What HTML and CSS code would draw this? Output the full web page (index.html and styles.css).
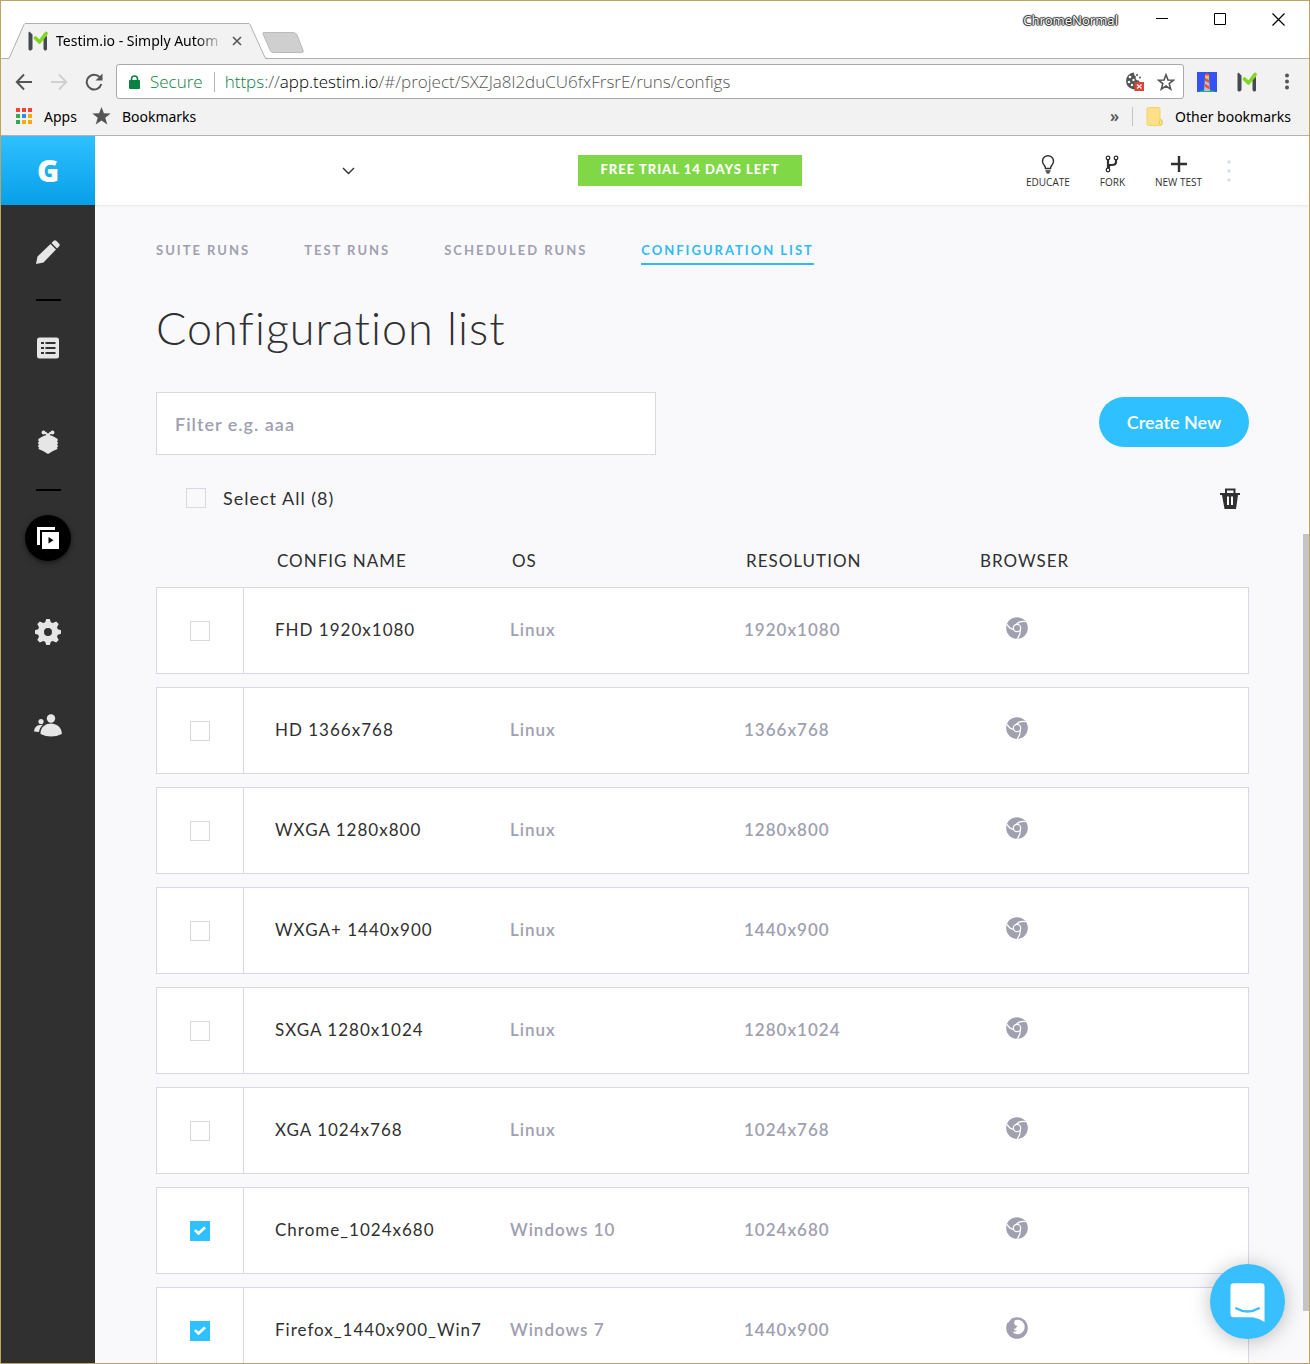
FILE: index.html
```html
<!DOCTYPE html>
<html lang="en">
<head>
<meta charset="utf-8">
<meta name="viewport" content="width=device-width, initial-scale=1">
<title>Testim.io - Simply Automated</title>
<link rel="stylesheet" href="styles.css">
</head>
<body>
<svg class="sprite" aria-hidden="true">
  <symbol id="i-chrome" viewBox="0 0 22 22">
    <circle cx="11" cy="11" r="10.8" fill="currentColor"/>
    <g fill="none" stroke="#fff" stroke-width="1.2">
      <circle cx="11" cy="11" r="3.7"/>
      <path d="M10.500 7.300C12.500 4.600 16 4 19.600 4.600"/>
      <path d="M14.400 12.700C14.600 16 13.400 19 11.300 22"/>
      <path d="M7.600 12.500C4.600 12 2.400 9.800 1 7.400"/>
    </g>
  </symbol>
  <symbol id="i-firefox" viewBox="0 0 22 22">
    <circle cx="11" cy="11" r="10.8" fill="currentColor"/>
    <path fill="#fff" d="M8.600 3.400c4-1.600 8.400.3 9.700 4.200 1.200 4-.6 8.300-4.600 9.300-2.900.7-5.900-.2-7-2.500 1.600.7 3.300.3 4.500-.8-1.700-.1-3-.5-3.600-1.900l2.500-.3.300-1.500 1.500-.9c-1.500-.2-3-.5-3.500-1.900-.3-1.300-.1-2.600.2-3.700z"/>
    <path fill="#fff" d="M0 3.500L1.600 1l.9 2L4 1.200l.7 1.300L2 6z"/>
  </symbol>
  <symbol id="i-m" viewBox="0 0 20 20">
    <path fill="#454a50" d="M.5 1.500L1.500.5 4.500 3.500V18L3 19.500H1.500L.5 18.500zM15.500 8l3.500-3.500V18.500l-1 1h-1.500l-1-1.500z"/>
    <path fill="none" stroke="#81d61f" stroke-width="3.600" stroke-linejoin="round" stroke-linecap="round" d="M7.500 7l4 4L18 2.500"/>
  </symbol>
</svg>

<div class="window">
  <header class="titlebar">
    <div class="tab">
      <svg class="tab-shape" viewBox="0 0 260 37" aria-hidden="true"><path d="M0 36L1 35.500 16 1.500 17 .5H241L242 1.500 257 35.500 259 37H0z" fill="#f2f2f2"/><path d="M0 35.500H1L16 1.500 17 .5H241L242 1.500 257 34.500 259 35.500" fill="none" stroke="#b0b0b0"/></svg>
      <svg class="favicon" aria-hidden="true"><use href="#i-m"/></svg>
      <span class="tab-title">Testim.io - Simply Autom</span>
      <button class="plain tab-close" aria-label="Close tab"><svg width="10" height="10" viewBox="0 0 10 10"><path d="M1 1l8 8M9 1L1 9" stroke="#555" stroke-width="1.600"/></svg></button>
    </div>
    <button class="plain new-tab" aria-label="New tab"><svg width="44" height="24" viewBox="0 0 44 24"><path d="M3 1.500H32Q35 1.500 36 4L42 19Q43 21.500 41 21.500H12Q10 21.500 9 19L2 3Q1.500 1.500 3 1.500z" fill="#cfcfcf" stroke="#bbb"/></svg></button>
    <span class="profile">ChromeNormal</span>
    <div class="controls">
      <button class="plain control" aria-label="Minimize"><svg width="13" height="13" viewBox="0 0 13 13"><path d="M0 5.500h12" stroke="#000"/></svg></button>
      <button class="plain control" aria-label="Maximize"><svg width="13" height="13" viewBox="0 0 13 13"><path d="M.5 .5h11v11H.5z" fill="none" stroke="#000"/></svg></button>
      <button class="plain control" aria-label="Close"><svg width="13" height="13" viewBox="0 0 13 13"><path d="M.5 .5l12 12M12.500 .5l-12 12" stroke="#000" stroke-width="1.200"/></svg></button>
    </div>
  </header>

  <div class="toolbar">
    <div class="nav-buttons">
      <button class="plain tool" aria-label="Back"><svg width="18" height="18" viewBox="0 0 18 18"><path d="M17 9H2M9 1.500L1.800 9 9 16.500" fill="none" stroke="#555" stroke-width="2"/></svg></button>
      <button class="plain tool" aria-label="Forward"><svg width="18" height="18" viewBox="0 0 18 18"><path d="M1 9h15M9 1.500L16.200 9 9 16.500" fill="none" stroke="#d0d0d0" stroke-width="2"/></svg></button>
      <button class="plain tool" aria-label="Reload"><svg width="18" height="18" viewBox="0 0 18 18"><path d="M14.700 4.200A7.400 7.400 0 1 0 16.300 11" fill="none" stroke="#555" stroke-width="2"/><path d="M17.500 .5V7.500H10.500z" fill="#555"/></svg></button>
    </div>
    <div class="omnibox">
      <svg class="lock" width="11" height="14" viewBox="0 0 11 14" aria-hidden="true"><rect y="5" width="11" height="9" rx="1" fill="#0b8043"/><path d="M2.500 6V4a3 3 0 0 1 6 0v2" fill="none" stroke="#0b8043" stroke-width="1.600"/></svg>
      <span class="secure">Secure</span>
      <span class="url"><span class="green">https</span>://<span class="host">app.testim.io</span>/#/project/SXZJa8l2duCU6fxFrsrE/runs/configs</span>
      <button class="plain" aria-label="Cookies blocked"><svg width="20" height="20" viewBox="0 0 20 20"><path d="M9 .5a8.500 8.500 0 1 0 1 17l7-7c-2 0-3-1-3-2-3 0-4-2-3-4-2-1-2-2-2-4z" fill="#555"/><g fill="#fff"><circle cx="5" cy="5" r="1.300"/><circle cx="4" cy="10" r="1.300"/><circle cx="8.500" cy="8" r="1.200"/><circle cx="7" cy="13" r="1.200"/></g><circle cx="12" cy="3" r="1" fill="#555"/><circle cx="15" cy="5.500" r="1" fill="#555"/><rect x="9.500" y="10" width="9.500" height="9" fill="#db4437"/><path d="M12 12.500l4.500 4M16.500 12.500l-4.500 4" stroke="#fff" stroke-width="1.300"/></svg></button>
      <button class="plain" aria-label="Bookmark this page"><svg width="18" height="18" viewBox="0 0 18 18"><path d="M9 1.800l2 5.200 5.500.2-4.300 3.400 1.500 5.500L9 13l-4.700 3.100 1.500-5.500L1.500 7.200 7 7z" fill="none" stroke="#555" stroke-width="1.600"/></svg></button>
    </div>
    <div class="extensions">
      <button class="plain" aria-label="Lighthouse"><svg width="20" height="20" viewBox="0 0 20 20"><path d="M0 0h20v20H0z" fill="#3453f5"/><ellipse cx="10" cy="20" rx="8" ry="2" fill="#1db954"/><path d="M8 6h4l1 13H7z" fill="#b9bde0"/><path d="M8 6l4 2v3L7.500 8.500zM7.500 11.500l5 3v3l-5-3z" fill="#f4511e"/><path d="M8 3l2-1.500L12 3v3H8z" fill="#fbc02d"/><path d="M7.500 3.500L10 1l2.500 2.500z" fill="#f4511e"/></svg></button>
      <button class="plain" aria-label="Testim"><svg width="20" height="20"><use href="#i-m"/></svg></button>
      <button class="plain" aria-label="Menu"><svg width="20" height="20" viewBox="0 0 20 20" fill="#555"><circle cx="10" cy="3.500" r="2"/><circle cx="10" cy="9.500" r="2"/><circle cx="10" cy="15.500" r="2"/></svg></button>
    </div>
  </div>

  <nav class="bookmarks" aria-label="Bookmarks">
    <a class="bookmark" href="#apps"><svg width="18" height="18" viewBox="0 0 18 18" aria-hidden="true"><path fill="#f44336" d="M1 1h4v4H1zM7 1h4v4H7zM13 1h4v4h-4z"/><path fill="#34a853" d="M1 7h4v4H1zM1 13h4v4H1z"/><path fill="#2a8cf4" d="M7 7h4v4H7z"/><path fill="#fbab00" d="M13 7h4v4h-4zM7 13h4v4H7zM13 13h4v4h-4z"/></svg>Apps</a>
    <a class="bookmark" href="#bookmarks"><svg width="19" height="18" viewBox="0 0 19 18" aria-hidden="true"><path fill="#555" d="M9.500 0l2.400 6.300 6.800.2-5.400 4.200 2 6.800-5.800-4-5.800 4 2-6.800L.3 6.500l6.800-.2z"/></svg>Bookmarks</a>
    <button class="plain overflow" aria-label="More bookmarks">»</button>
    <a class="bookmark other" href="#other"><svg width="18" height="19" viewBox="0 0 18 19" aria-hidden="true"><path d="M1 2q0-1.500 1.500-1.500h10q1.500 0 1.500 1.500v10l2 1v4q0 1.500-1.500 1.500H2.500Q1 18.500 1 17z" fill="#fee08a" stroke="#f3d16c"/><path d="M13.500 17v-3q1-2 2.500 0v3q-1 1.500-2.500 0z" fill="#ffe79b" stroke="#efc84a"/></svg>Other bookmarks</a>
  </nav>

  <div class="app">
    <aside class="sidebar">
      <a class="logo" href="#home" aria-label="Home">G</a>
      <nav class="side-nav" aria-label="Main">
        <a class="side-item" href="#edit" aria-label="Editor"><svg width="26" height="26" viewBox="0 0 26 26"><path fill="currentColor" d="M1 25l1.500-7.500L15.500 5l5.500 5.500L8.500 23.500zM16.500 4l2.200-2.200Q20 .8 21.200 1.800l3 3q1 1.200 0 2.400L22 9.500z"/></svg></a>
        <hr class="side-rule">
        <a class="side-item" href="#tests" aria-label="Test list"><svg width="22" height="22" viewBox="0 0 22 22"><rect width="22" height="21" y=".5" rx="2.500" fill="currentColor"/><path d="M4 6h3M8.500 6h10M4 11h3M8.500 11h10M4 16h3M8.500 16h10" stroke="#303030" stroke-width="2"/></svg></a>
        <a class="side-item" href="#bugs" aria-label="Bugs"><svg width="22" height="24" viewBox="0 0 22 24"><g fill="currentColor"><path d="M11 4.500L15.500 6 20 8.500 21 10 20 11.500 21.200 13 20 14.500 21.200 16 20 17.500 20.500 19 16 21 11 24 6 21 1.500 19 2 17.500.8 16 2 14.500.8 13 2 11.500 1 10 2 8.500 6.500 6z"/><circle cx="6.500" cy="2.500" r="1.900"/><circle cx="15.500" cy="2.500" r="1.900"/></g><path d="M6.500 2.500Q9 2 11 5.500 13 2 15.500 2.500" fill="none" stroke="currentColor" stroke-width="2"/></svg></a>
        <hr class="side-rule">
        <a class="side-item active" href="#runs" aria-label="Runs"><span class="disc"><svg width="22" height="22" viewBox="0 0 22 22"><path fill="currentColor" d="M0 0h18v3H3v15H0zM5 5h17v17H5z"/><path d="M11.500 10v6.500l5-3.200z" fill="#000"/></svg></span></a>
        <a class="side-item" href="#settings" aria-label="Settings"><svg width="26" height="26" viewBox="0 0 26 26"><path fill="currentColor" fill-rule="evenodd" d="M11.200 0h3.600l1 3.300 2 .8 3.400-1.700 2.500 2.500L22 8.200l.8 2 3.200 1v3.600l-3.200 1-.8 2 1.700 3.300-2.500 2.500-3.400-1.700-2 .8-1 3.300h-3.600l-1-3.300-2-.8-3.400 1.700-2.500-2.500L4 17.800l-.8-2-3.200-1v-3.600l3.200-1 .8-2L2.300 4.900l2.500-2.500 3.400 1.700 2-.8zM13 9a4 4 0 1 0 0 8 4 4 0 0 0 0-8z"/></svg></a>
        <a class="side-item" href="#team" aria-label="Team"><svg width="28" height="24" viewBox="0 0 28 24"><g fill="currentColor"><circle cx="17" cy="4.500" r="4.200"/><path d="M6.500 20C6 13 12 9.500 17 9.500s11 3.500 10.800 10.500Q17 25 6.500 20z"/><circle cx="7" cy="7.500" r="2.600"/><path d="M0 17.500q.5-6 6-6.500l3-.3Q5.500 13.500 5 18z"/></g></svg></a>
      </nav>
    </aside>

    <div class="page">
      <header class="app-header">
        <button class="plain project" aria-label="Choose project"><svg width="13" height="8" viewBox="0 0 13 8"><path d="M1 1l5.500 5.500L12 1" fill="none" stroke="#303030" stroke-width="1.400"/></svg></button>
        <button class="plain trial">FREE TRIAL 14 DAYS LEFT</button>
        <div class="actions">
          <button class="plain action"><svg width="20" height="20" viewBox="0 0 20 20"><path d="M7.500 14.500Q7.500 12.500 6 11A5.500 5.500 0 1 1 14 11Q12.500 12.500 12.500 14.500zM7.500 17h5M8.500 18.800h3" fill="none" stroke="#303030" stroke-width="1.500"/></svg>EDUCATE</button>
          <button class="plain action"><svg width="20" height="20" viewBox="0 0 20 20"><g fill="none" stroke="#303030"><path d="M6 5v9M14 5v3q0 3-4 3H7v3" stroke-width="2.200"/><g stroke-width="1.300"><circle cx="6" cy="4" r="1.800"/><circle cx="14" cy="4" r="1.800"/><circle cx="6" cy="16" r="1.800"/></g></g></svg>FORK</button>
          <button class="plain action"><svg width="20" height="20" viewBox="0 0 20 20"><path d="M10 2v16M2 10h16" stroke="#303030" stroke-width="2.400"/></svg>NEW TEST</button>
          <button class="plain more" aria-label="More"><svg width="6" height="24" viewBox="0 0 6 24" fill="#d8e0ec"><circle cx="3" cy="3" r="1.800"/><circle cx="3" cy="12" r="1.800"/><circle cx="3" cy="21" r="1.800"/></svg></button>
        </div>
      </header>

      <main class="main">
        <nav class="tabs" aria-label="Runs">
          <a class="tab-link" href="#suite">SUITE RUNS</a>
          <a class="tab-link" href="#test">TEST RUNS</a>
          <a class="tab-link" href="#scheduled">SCHEDULED RUNS</a>
          <a class="tab-link current" href="#configs">CONFIGURATION LIST</a>
        </nav>
        <h1 class="title">Configuration list</h1>
        <div class="filter-row">
          <input class="filter" type="text" placeholder="Filter e.g. aaa" aria-label="Filter">
          <button class="create">Create New</button>
        </div>
        <div class="select-row">
          <label class="select-all"><input class="check" type="checkbox">Select All (8)</label>
          <button class="plain" aria-label="Delete selected"><svg width="20" height="21" viewBox="0 0 20 21"><path d="M6 5V1.500h8.500V5" fill="none" stroke="#303030" stroke-width="2"/><path d="M0 5h20v2h-2l-2 14H4.500L2 7H0z" fill="#303030"/><path d="M7 8.500h2V17H7zM11 8.500h2V17h-2z" fill="#fff"/></svg></button>
        </div>

        <table class="configs">
          <colgroup><col class="col-check"><col class="col-name"><col class="col-text"><col class="col-text"><col></colgroup>
          <thead>
            <tr><td></td><th scope="col">CONFIG NAME</th><th scope="col">OS</th><th scope="col">RESOLUTION</th><th scope="col">BROWSER</th></tr>
          </thead>
          <tbody>
            <tr><td class="pick"><input class="check" type="checkbox" aria-label="Select FHD 1920x1080"></td><td class="name">FHD 1920x1080</td><td>Linux</td><td>1920x1080</td><td class="browser"><svg role="img" aria-label="Chrome"><use href="#i-chrome"/></svg></td></tr>
            <tr><td class="pick"><input class="check" type="checkbox" aria-label="Select HD 1366x768"></td><td class="name">HD 1366x768</td><td>Linux</td><td>1366x768</td><td class="browser"><svg role="img" aria-label="Chrome"><use href="#i-chrome"/></svg></td></tr>
            <tr><td class="pick"><input class="check" type="checkbox" aria-label="Select WXGA 1280x800"></td><td class="name">WXGA 1280x800</td><td>Linux</td><td>1280x800</td><td class="browser"><svg role="img" aria-label="Chrome"><use href="#i-chrome"/></svg></td></tr>
            <tr><td class="pick"><input class="check" type="checkbox" aria-label="Select WXGA+ 1440x900"></td><td class="name">WXGA+ 1440x900</td><td>Linux</td><td>1440x900</td><td class="browser"><svg role="img" aria-label="Chrome"><use href="#i-chrome"/></svg></td></tr>
            <tr><td class="pick"><input class="check" type="checkbox" aria-label="Select SXGA 1280x1024"></td><td class="name">SXGA 1280x1024</td><td>Linux</td><td>1280x1024</td><td class="browser"><svg role="img" aria-label="Chrome"><use href="#i-chrome"/></svg></td></tr>
            <tr><td class="pick"><input class="check" type="checkbox" aria-label="Select XGA 1024x768"></td><td class="name">XGA 1024x768</td><td>Linux</td><td>1024x768</td><td class="browser"><svg role="img" aria-label="Chrome"><use href="#i-chrome"/></svg></td></tr>
            <tr><td class="pick"><input class="check" type="checkbox" checked aria-label="Select Chrome_1024x680"></td><td class="name">Chrome_1024x680</td><td>Windows 10</td><td>1024x680</td><td class="browser"><svg role="img" aria-label="Chrome"><use href="#i-chrome"/></svg></td></tr>
            <tr><td class="pick"><input class="check" type="checkbox" checked aria-label="Select Firefox_1440x900_Win7"></td><td class="name">Firefox_1440x900_Win7</td><td>Windows 7</td><td>1440x900</td><td class="browser"><svg role="img" aria-label="Firefox"><use href="#i-firefox"/></svg></td></tr>
          </tbody>
        </table>
      </main>
    </div>
    <div class="scroll-thumb"></div>
    <button class="plain chat" aria-label="Open chat"><svg width="35" height="40" viewBox="0 0 37 42"><path d="M4 0h29q3.500 0 3.500 3.500V41Q31 37 24 36H4Q.5 36 .5 32.500v-29Q.5 0 4 0z" fill="#fff"/><path d="M6.500 26.500Q18.500 33.500 30.500 26.500" fill="none" stroke="#37bfff" stroke-width="2.400" stroke-linecap="round"/></svg></button>
  </div>
</div>
</body>
</html>
```
FILE: styles.css
```css
*,
*::before,
*::after {
  box-sizing: border-box;
}

body {
  margin: 0;
  font-family: Lato, "Liberation Sans", sans-serif;
  color: #303030;
}

svg {
  display: block;
}

a {
  color: inherit;
  text-decoration: none;
}

.sprite {
  position: absolute;
  width: 0;
  height: 0;
}

.plain {
  padding: 0;
  border: 0;
  background: none;
  font: inherit;
  color: inherit;
}

.window {
  display: flex;
  flex-direction: column;
  height: 100vh;
  border: 1px solid #bfa35f;
  overflow: hidden;
  background: #fff;
}

/* Browser frame */

.titlebar,
.toolbar,
.bookmarks {
  flex: none;
  display: flex;
  font-family: "Noto Sans", "Open Sans", sans-serif;
}

.titlebar {
  height: 58px;
  align-items: flex-end;
  border-bottom: 1px solid #b0b0b0;
}

.tab {
  position: relative;
  display: flex;
  align-items: center;
  width: 260px;
  height: 36px;
  margin: 0 -8px -1px 7px;
  padding: 0 26px 0 20px;
}

.tab-shape {
  position: absolute;
  left: 0;
  top: 0;
  width: 260px;
  height: 37px;
}

.favicon {
  position: relative;
  flex: none;
  width: 20px;
  height: 20px;
}

.tab-title {
  position: relative;
  flex: 1;
  margin: 0 8px;
  padding-bottom: 2px;
  white-space: nowrap;
  font-size: 14px;
  color: #000;
  -webkit-mask-image: linear-gradient(to left, transparent, #000 28px);
  mask-image: linear-gradient(to left, transparent, #000 28px);
}

.tab-close {
  position: relative;
}

.new-tab {
  align-self: center;
  padding: 26px 0 0 1px;
}

.profile {
  align-self: flex-start;
  margin: 9px 15px 0 auto;
  font-size: 13px;
  line-height: 20px;
  color: #fff;
  text-shadow: 0 0 1px #000, 1px 0 1px #333, -1px 0 1px #333, 0 1px 1px #333, 0 -1px 1px #333;
}

.controls {
  display: flex;
  align-self: flex-start;
  margin-right: 2px;
}

.control {
  display: flex;
  align-items: center;
  justify-content: center;
  width: 58px;
  height: 36px;
}

.toolbar {
  align-items: center;
  gap: 10px;
  padding: 5px 12px 0 11px;
  background: #f2f2f2;
}

.nav-buttons {
  display: flex;
  gap: 11px;
}

.tool {
  display: flex;
  justify-content: center;
  width: 24px;
}

.omnibox {
  flex: 1;
  display: flex;
  align-items: center;
  height: 35px;
  padding: 0 8px 0 12px;
  border: 1px solid #a9a9a9;
  border-radius: 3px;
  background: #fff;
  font-family: "Open Sans", "Noto Sans", sans-serif;
  font-size: 17px;
  font-weight: 300;
  white-space: nowrap;
}

.secure {
  margin: 0 11px 0 10px;
  color: #0b8043;
}

.url {
  flex: 1;
  padding-left: 10px;
  border-left: 1px solid #b5b5b5;
  line-height: 20px;
  color: #555;
}

.green {
  color: #0b8043;
}

.host {
  color: #000;
}

.omnibox .plain {
  margin-left: 12px;
}

.extensions {
  display: flex;
  gap: 20px;
  padding-left: 3px;
}

.bookmarks {
  align-items: center;
  height: 37px;
  padding: 0 18px 2px 14px;
  border-bottom: 1px solid #b0b0b0;
  background: #f2f2f2;
  font-size: 14px;
  color: #000;
}

.bookmark {
  display: flex;
  align-items: center;
  gap: 11px;
  margin-right: 15px;
}

.overflow {
  margin: 0 13px 0 auto;
  font-size: 16px;
  line-height: 20px;
  font-weight: 600;
  color: #555;
}

.other {
  margin: 0;
  padding-left: 13px;
  border-left: 1px solid #c4c4c4;
}

/* Application */

.app {
  position: relative;
  flex: 1;
  display: flex;
  min-height: 0;
}

.sidebar {
  flex: none;
  width: 94px;
  background: #303030;
}

.logo {
  display: flex;
  align-items: center;
  justify-content: center;
  height: 69px;
  background: linear-gradient(#2fc1ff, #079fe8);
  font-family: "Open Sans", sans-serif;
  font-size: 30px;
  font-weight: 800;
  color: #fff;
}

.side-nav {
  display: flex;
  flex-direction: column;
  align-items: center;
}

.side-item {
  display: flex;
  align-items: center;
  justify-content: center;
  width: 100%;
  height: 94px;
  color: #e6e6e6;
}

.side-rule {
  width: 25px;
  height: 2px;
  margin: 0;
  border: 0;
  background: #000;
}

.active {
  color: #fff;
}

.disc {
  display: flex;
  align-items: center;
  justify-content: center;
  width: 46px;
  height: 46px;
  border-radius: 50%;
  background: #000;
  box-shadow: 0 2px 5px rgba(0, 0, 0, 0.5);
}

.page {
  flex: 1;
  display: flex;
  flex-direction: column;
  min-width: 0;
  background: #f9f9fc;
}

.app-header {
  flex: none;
  display: grid;
  grid-template-columns: 1fr auto 1fr;
  align-items: center;
  height: 70px;
  padding-right: 24px;
  border-bottom: 1px solid #ececee;
  background: #fff;
  box-shadow: 0 1px 2px rgba(0, 0, 0, 0.04);
}

.project {
  display: flex;
  justify-content: flex-end;
  width: 260px;
}

.trial {
  width: 224px;
  height: 31px;
  padding-bottom: 3px;
  background: #80d846;
  font-size: 13px;
  font-weight: 900;
  letter-spacing: 1px;
  color: #fff;
}

.actions {
  display: flex;
  justify-content: flex-end;
  align-items: center;
  gap: 30px;
  padding-right: 53px;
}

.action {
  display: flex;
  flex-direction: column;
  align-items: center;
  padding-top: 3px;
  font-family: "Open Sans", sans-serif;
  font-size: 10px;
  line-height: 16px;
}

.more {
  margin-left: -6px;
}

.main {
  flex: 1;
  min-height: 0;
  overflow: hidden;
  padding: 36px 60px 0 61px;
}

.tabs {
  display: flex;
  gap: 54px;
  font-size: 13px;
  line-height: 16px;
  font-weight: 700;
  letter-spacing: 2px;
  color: #a0a0b0;
}

.tab-link {
  padding-bottom: 5px;
  border-bottom: 2px solid transparent;
}

.current {
  border-color: #2fbbf5;
  color: #2fbbf5;
}

.title {
  margin: 35px 0 36px;
  font-size: 45px;
  line-height: 56px;
  font-weight: 300;
  letter-spacing: 1px;
}

.filter-row {
  display: flex;
  align-items: center;
  justify-content: space-between;
  margin-bottom: 31px;
}

.filter {
  width: 500px;
  height: 63px;
  padding: 0 18px;
  border: 1px solid #d8d8e5;
  background: #fff;
  font: inherit;
  font-size: 18px;
  font-weight: 600;
  letter-spacing: 1px;
}

.filter::placeholder {
  color: #a0a0b0;
}

.create {
  width: 150px;
  height: 50px;
  margin-bottom: 3px;
  border: 0;
  border-radius: 25px;
  background: #2fc1ff;
  font: inherit;
  font-size: 18px;
  font-weight: 600;
  color: #fff;
}

.select-row {
  display: flex;
  align-items: center;
  justify-content: space-between;
  height: 24px;
  margin-bottom: 25px;
  padding: 0 9px 0 30px;
}

.select-all {
  display: flex;
  align-items: center;
  gap: 17px;
  font-size: 18px;
  line-height: 24px;
  letter-spacing: 1px;
}

.check {
  display: flex;
  align-items: center;
  justify-content: center;
  appearance: none;
  width: 20px;
  height: 20px;
  margin: 0;
  border: 1px solid #d8d8e5;
}

.check:checked {
  border-color: #2fc1ff;
  background: #2fc1ff;
}

.check:checked::before {
  content: "";
  width: 12px;
  height: 10px;
  background: #fff;
  clip-path: polygon(0 50%, 15% 32%, 38% 56%, 84% 5%, 100% 22%, 38% 92%);
}

.configs {
  width: 100%;
  table-layout: fixed;
  border-collapse: separate;
  border-spacing: 0 13px;
  font-size: 17px;
  line-height: 26px;
  letter-spacing: 1px;
  white-space: nowrap;
}

.col-check {
  width: 88px;
}

.col-name {
  width: 235px;
}

.col-text {
  width: 234px;
}

.configs th {
  padding: 0 0 0 33px;
  font-weight: 400;
  text-align: left;
}

.configs thead td {
  padding: 0;
}

.configs tbody td {
  height: 87px;
  padding: 0 0 2px 31px;
  border: solid #d8d8e5;
  border-width: 1px 0;
  background: #fff;
  font-weight: 600;
  color: #a0a0b0;
}

.configs tbody .pick {
  padding: 1px 33px 0;
  border-width: 1px;
}

.configs tbody .name {
  font-weight: 400;
  color: #303030;
}

.configs tbody .browser {
  padding: 0 0 6px 59px;
  border-right-width: 1px;
  color: #a0a0b0;
}

.browser svg {
  width: 22px;
  height: 22px;
}

.scroll-thumb {
  position: absolute;
  right: 0;
  top: 398px;
  width: 6px;
  height: 777px;
  background: #c5c5c7;
}

.chat {
  position: absolute;
  right: 24px;
  bottom: 24px;
  display: flex;
  align-items: center;
  justify-content: center;
  width: 75px;
  height: 75px;
  padding-top: 3px;
  border-radius: 50%;
  background: #37bfff;
  box-shadow: 0 2px 20px rgba(0, 0, 0, 0.25);
}
```
